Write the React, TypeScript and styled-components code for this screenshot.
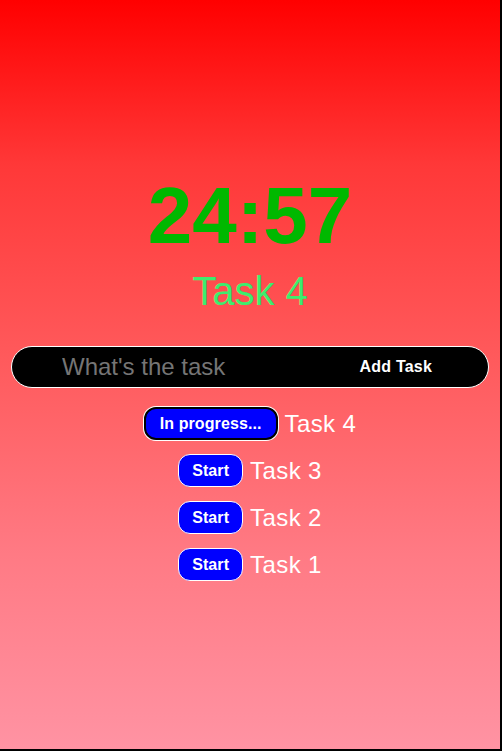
import React from "react";
import styled, { createGlobalStyle, css } from "styled-components";

const GlobalStyle = createGlobalStyle`
  html { background: #000; }
  body { margin: 0; }
  * { box-sizing: border-box; }
`;

const Page = styled.div`
  width: 500px;
  height: 749px;
  background: linear-gradient(
    to bottom,
    #ff0000 0%,
    #ff3838 22%,
    #ff5a5c 48%,
    #ff7a84 74%,
    #ff93a3 100%
  );
  display: flex;
  flex-direction: column;
  align-items: center;
  padding-top: 171px;
  font-family: "Liberation Sans", Arial, sans-serif;
`;

const Timer = styled.h1`
  margin: 0;
  font-size: 80px;
  line-height: 90px;
  font-weight: 700;
  color: #00b800;
`;

const CurrentTask = styled.h2`
  margin: 8px 0 0;
  font-size: 40px;
  line-height: 45px;
  font-weight: 400;
  color: #3ded6e;
`;

const TaskForm = styled.form`
  align-self: stretch;
  margin: 32px 11px 0;
  height: 42px;
  display: flex;
  background: #000;
  border: 1px solid #fff;
  border-radius: 21px;
  overflow: hidden;
`;

const TaskInput = styled.input`
  flex: 1;
  min-width: 0;
  background: transparent;
  border: none;
  outline: none;
  padding: 0 0 0 50px;
  font-family: "Liberation Sans", Arial, sans-serif;
  font-size: 24px;
  color: #fff;
  &::placeholder {
    color: #757575;
  }
`;

const AddButton = styled.button`
  background: transparent;
  border: none;
  color: #fff;
  font-family: "Liberation Sans", Arial, sans-serif;
  font-size: 16px;
  font-weight: 700;
  letter-spacing: 0.2px;
  padding: 0 56px 0 20px;
  cursor: pointer;
`;

const TaskList = styled.ul`
  list-style: none;
  margin: 19px 0 0;
  padding: 0;
  display: flex;
  flex-direction: column;
  align-items: center;
  gap: 14px;
`;

const TaskRow = styled.li`
  display: flex;
  align-items: center;
  gap: 7px;
  height: 33px;
`;

const StatusButton = styled.button<{ $active?: boolean }>`
  height: 33px;
  padding: 0 13px;
  border: 1px solid #fff;
  border-radius: 12px;
  background: #0000ff;
  color: #fff;
  font-family: "Liberation Sans", Arial, sans-serif;
  font-size: 16px;
  font-weight: 700;
  letter-spacing: 0.1px;
  cursor: pointer;
  ${(p) =>
    p.$active &&
    css`
      border: 2px solid #000;
      box-shadow: 0 0 0 1px #fff;
      padding: 0 14px;
    `}
`;

const TaskName = styled.span`
  font-size: 24px;
  letter-spacing: 0.4px;
  color: #fff;
`;

const tasks = [
  { id: 4, name: "Task 4", active: true },
  { id: 3, name: "Task 3", active: false },
  { id: 2, name: "Task 2", active: false },
  { id: 1, name: "Task 1", active: false },
];

export default function App() {
  return (
    <>
      <GlobalStyle />
      <Page>
        <Timer>24:57</Timer>
        <CurrentTask>Task 4</CurrentTask>
        <TaskForm onSubmit={(e) => e.preventDefault()}>
          <TaskInput placeholder="What's the task" />
          <AddButton type="submit">Add Task</AddButton>
        </TaskForm>
        <TaskList>
          {tasks.map((t) => (
            <TaskRow key={t.id}>
              <StatusButton $active={t.active}>
                {t.active ? "In progress..." : "Start"}
              </StatusButton>
              <TaskName>{t.name}</TaskName>
            </TaskRow>
          ))}
        </TaskList>
      </Page>
    </>
  );
}
